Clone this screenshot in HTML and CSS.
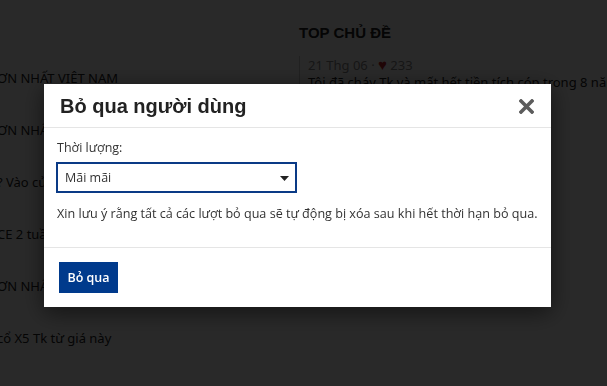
FILE: index.html
```html
<!DOCTYPE html>
<html lang="vi">
<head>
<meta charset="utf-8">
<title>Bỏ qua người dùng</title>
<link rel="stylesheet" href="styles.css">
</head>
<body>
<div class="page">
  <div class="left-col">
    <div class="item">ƠN NHẤT VIỆT NAM</div>
    <div class="item">ƠN NHẤT VIỆT NAM</div>
    <div class="item">? Vào cửa hàng</div>
    <div class="item">CE 2 tuần</div>
    <div class="item">ƠN NHẤT VIỆT NAM</div>
    <div class="item">cổ X5 Tk từ giá này</div>
  </div>
  <div class="right-col">
    <h3 class="side-title">TOP CHỦ ĐỀ</h3>
    <div class="topic">
      <div class="meta">21 Thg 06 · <span class="heart">&#9829;</span> 233</div>
      <div class="topic-title">Tôi đã cháy Tk và mất hết tiền tích cóp trong 8 năm</div>
    </div>
    <div class="topic topic-2">
      <div class="meta">21 Thg 06 · <span class="heart">&#9829;</span> 120</div>
      <div class="topic-title">Bán cổ X5 Tk từ giá này</div>
    </div>
  </div>
</div>

<div class="overlay">
  <div class="modal">
    <div class="modal-header">
      <h2 class="modal-title">Bỏ qua người dùng</h2>
      <button class="close" type="button" aria-label="Đóng">
        <svg width="15" height="15" viewBox="0 0 15 15"><path d="M2 2 L13 13 M13 2 L2 13" stroke="#5c5c5c" stroke-width="3.6" stroke-linecap="square" fill="none"/></svg>
      </button>
    </div>
    <div class="modal-body">
      <label class="field-label">Thời lượng:</label>
      <div class="select">
        <span>Mãi mãi</span>
        <svg class="caret" width="9" height="5" viewBox="0 0 9 5"><path d="M0 0 H9 L4.5 5 Z" fill="#222"/></svg>
      </div>
      <p class="note">Xin lưu ý rằng tất cả các lượt bỏ qua sẽ tự động bị xóa sau khi hết thời hạn bỏ qua.</p>
    </div>
    <div class="modal-footer">
      <button class="btn-primary" type="button">Bỏ qua</button>
    </div>
  </div>
</div>
</body>
</html>
```
FILE: styles.css
```css
* { box-sizing: border-box; }
html, body { margin: 0; padding: 0; }
body {
  width: 607px;
  height: 386px;
  overflow: hidden;
  background: #fff;
  font-family: "Open Sans", "Noto Sans", sans-serif;
  color: #333;
}
.page {
  display: flex;
  height: 386px;
}
.left-col {
  width: 302px;
  flex: none;
  padding-top: 68px;
  margin-left: -3px;
  font-family: "Noto Sans", sans-serif;
  font-size: 13px;
  color: #222;
}
.item {
  height: 52px;
  line-height: 20px;
  white-space: nowrap;
}
.right-col {
  flex: 1;
  padding-top: 23px;
  white-space: nowrap;
}
.side-title {
  margin: 0 0 13px 0;
  font-family: "Liberation Sans", Arial, sans-serif;
  font-size: 15px;
  font-weight: bold;
  color: #222;
  line-height: 20px;
}
.topic {
  border-left: 1px solid #ccc;
  padding-left: 8px;
  font-family: "Noto Sans", sans-serif;
  font-size: 13px;
  line-height: 17px;
}
.topic-2 { margin-top: 18px; }
.meta { color: #888; }
.heart { color: #c0202a; font-size: 15px; }
.topic-title { color: #222; }

.overlay {
  position: fixed;
  inset: 0;
  background: rgba(0,0,0,0.84);
  padding: 84px 0 0 44px;
}
.modal {
  width: 507px;
  background: #fff;
  box-shadow: 0 5px 22px rgba(0,0,0,0.55);
}
.modal-header {
  height: 44px;
  padding: 0 16px;
  display: flex;
  align-items: center;
  justify-content: space-between;
  border-bottom: 1px solid #e5e5e5;
}
.modal-title {
  margin: 0;
  font-family: "Liberation Sans", Arial, sans-serif;
  font-size: 20px;
  font-weight: bold;
  color: #222;
  padding-top: 1px;
}
.close {
  border: 0;
  background: none;
  padding: 0;
  margin-right: 1px;
  display: flex;
  margin-top: 1px;
}
.modal-body {
  padding: 11px 12px 0 12px;
  height: 120px;
  border-bottom: 1px solid #e5e5e5;
}
.field-label {
  display: block;
  font-size: 12.5px;
  line-height: 17px;
  color: #333;
  margin-left: 1px;
  margin-bottom: 6px;
}
.select {
  width: 241px;
  height: 31px;
  border: 2px solid #0a3a86;
  display: flex;
  align-items: center;
  justify-content: space-between;
  padding: 0 6px 0 7px;
  font-size: 12.5px;
  color: #333;
}
.caret { margin-top: 1px; }
.note {
  margin: 12px 0 0 1px;
  font-size: 12.6px;
  line-height: 17px;
  color: #333;
  white-space: nowrap;
}
.modal-footer {
  padding: 14px 15px 14px 15px;
}
.btn-primary {
  width: 59px;
  height: 31px;
  border: 0;
  background: #003a8c;
  color: #fff;
  font-family: "Open Sans", "Noto Sans", sans-serif;
  font-weight: 600;
  font-size: 12.5px;
  padding: 0;
}
```
